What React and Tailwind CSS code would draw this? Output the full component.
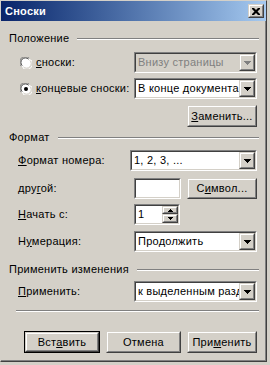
import React from "react"

const face = "bg-[#d4d0c8]"

function Raised({ children, className = "" }) {
  return (
    <div className={`flex border border-t-[#d4d0c8] border-l-[#d4d0c8] border-b-[#404040] border-r-[#404040] ${face} ${className}`}>
      <div className="flex flex-1 items-center justify-center border border-t-white border-l-white border-b-[#808080] border-r-[#808080]">
        {children}
      </div>
    </div>
  )
}

function Sunken({ children, className = "", bg = "bg-white" }) {
  return (
    <div className={`flex min-w-0 border border-t-[#808080] border-l-[#808080] border-b-white border-r-white ${className}`}>
      <div className={`flex flex-1 min-w-0 border border-t-[#404040] border-l-[#404040] border-b-[#d4d0c8] border-r-[#d4d0c8] ${bg}`}>
        {children}
      </div>
    </div>
  )
}

function Tri({ color = "#000", w = 7, h = 4, up = false }) {
  const pts = up ? `0,${h} ${w},${h} ${w / 2},0` : `0,0 ${w},0 ${w / 2},${h}`
  return (
    <svg width={w} height={h} viewBox={`0 0 ${w} ${h}`} className="block">
      <polygon points={pts} fill={color} shapeRendering="crispEdges" />
    </svg>
  )
}

function Combo({ text, disabled, className = "" }) {
  return (
    <Sunken className={`h-[21px] ${className}`} bg={disabled ? "bg-[#d4d0c8]" : "bg-white"}>
      <div className={`flex-1 min-w-0 overflow-hidden whitespace-nowrap pl-[2px] leading-[17px] ${disabled ? "text-[#808080]" : "text-black"}`}>
        {text}
      </div>
      <Raised className="w-[16px] h-[17px] shrink-0">
        <Tri color={disabled ? "#808080" : "#000"} />
      </Raised>
    </Sunken>
  )
}

function Btn({ children, className = "", def }) {
  const b = <Raised className="h-full w-full">{children}</Raised>
  if (def) return <div className={`flex border border-black ${className}`}>{b}</div>
  return <div className={`flex ${className}`}>{b}</div>
}

function Radio({ checked }) {
  return (
    <svg width="12" height="12" viewBox="0 0 12 12" className="block shrink-0">
      <circle cx="6" cy="6" r="5.5" fill="#fff" />
      <path d="M1.2 9.2 A5.5 5.5 0 0 1 9.2 1.2" stroke="#808080" strokeWidth="1" fill="none" />
      <path d="M2.2 8.6 A4.3 4.3 0 0 1 8.6 2.2" stroke="#404040" strokeWidth="1" fill="none" />
      <path d="M10.8 2.8 A5.5 5.5 0 0 1 2.8 10.8" stroke="#fff" strokeWidth="1" fill="none" />
      <path d="M9.8 3.4 A4.3 4.3 0 0 1 3.4 9.8" stroke="#d4d0c8" strokeWidth="1" fill="none" />
      {checked && <circle cx="6" cy="6" r="2" fill="#000" />}
    </svg>
  )
}

function GroupHead({ title, className = "" }) {
  return (
    <div className={`flex items-center h-[13px] pl-[8px] pr-[6px] ${className}`}>
      <span className="leading-[13px] whitespace-nowrap">{title}</span>
      <div className="flex-1 ml-[8px] h-[2px] border-t border-t-[#808080] border-b border-b-white" />
    </div>
  )
}

export default function App() {
  return (
    <div className="w-[270px] h-[365px] bg-[#d4d0c8] overflow-hidden font-['Liberation_Sans',Arial,sans-serif] text-[11px] tracking-[0.25px] text-black">
      <div className="w-[267px] h-[362px] flex flex-col border border-t-[#d4d0c8] border-l-[#d4d0c8] border-b-[#404040] border-r-[#404040]">
        {/* title bar */}
        <div className="h-[20px] flex items-center justify-between pl-[4px] pr-[2px] bg-gradient-to-r from-[#0a246a] to-[#a6caf0]">
          <span className="text-white font-bold text-[11px] leading-none">Сноски</span>
          <Raised className="w-[16px] h-[14px]">
            <svg width="8" height="7" viewBox="0 0 8 7" className="block">
              <path d="M0 0h2l2 2 2-2h2v1L5.5 3.5 8 6v1H6L4 5 2 7H0V6l2.5-2.5L0 1z" fill="#000" />
            </svg>
          </Raised>
        </div>

        <div className="flex-1 flex flex-col border-r border-b border-r-[#808080] border-b-[#808080]">
          {/* Положение */}
          <GroupHead title="Положение" className="mt-[11px]" />
          <div className="flex items-center mt-[7px] pl-[19px] pr-[8px]">
            <div className="flex items-center w-[114px] shrink-0 gap-[4px] whitespace-nowrap">
              <Radio />
              <span><u>с</u>носки:</span>
            </div>
            <Combo text="Внизу страницы" disabled className="flex-1" />
          </div>
          <div className="flex items-center mt-[5px] pl-[19px] pr-[8px]">
            <div className="flex items-center w-[114px] shrink-0 gap-[4px] whitespace-nowrap">
              <Radio checked />
              <span><u>к</u>онцевые сноски:</span>
            </div>
            <Combo text="В конце документа" className="flex-1" />
          </div>
          <div className="flex justify-end mt-[6px] pr-[8px]">
            <Btn className="w-[70px] h-[22px]"><span><u>З</u>аменить...</span></Btn>
          </div>

          {/* Формат */}
          <GroupHead title="Формат" className="mt-[4px]" />
          <div className="flex items-center mt-[6px] pl-[17px] pr-[8px]">
            <div className="w-[112px] shrink-0"><u>Ф</u>ормат номера:</div>
            <Combo text="1, 2, 3, ..." className="flex-1" />
          </div>
          <div className="flex items-center mt-[7px] pl-[17px] pr-[8px]">
            <div className="w-[116px] shrink-0">дру<u>г</u>ой:</div>
            <Sunken className="w-[47px] h-[21px] shrink-0" />
            <Btn className="ml-[6px] flex-1 h-[21px]"><span>С<u>и</u>мвол...</span></Btn>
          </div>
          <div className="flex items-center mt-[5px] pl-[17px] pr-[8px]">
            <div className="w-[116px] shrink-0"><u>Н</u>ачать с:</div>
            <Sunken className="w-[46px] h-[21px] shrink-0">
              <div className="flex-1 pl-[2px] leading-[17px]">1</div>
              <div className="flex flex-col w-[16px]">
                <Raised className="h-[8px]"><Tri w={5} h={3} up /></Raised>
                <Raised className="h-[9px]"><Tri w={5} h={3} /></Raised>
              </div>
            </Sunken>
          </div>
          <div className="flex items-center mt-[6px] pl-[17px] pr-[8px]">
            <div className="w-[116px] shrink-0">Н<u>у</u>мерация:</div>
            <Combo text="Продолжить" className="flex-1" />
          </div>

          {/* Применить изменения */}
          <GroupHead title="Применить изменения" className="mt-[11px]" />
          <div className="flex items-center mt-[5px] pl-[17px] pr-[8px]">
            <div className="w-[116px] shrink-0"><u>П</u>рименить:</div>
            <Combo text="к выделенным разделам" className="flex-1" />
          </div>

          <div className="mt-[8px] ml-[15px] mr-[6px] h-[2px] border-t border-t-[#808080] border-b border-b-white" />

          <div className="flex items-center mt-[19px] pl-[23px] pr-[8px] gap-[6px]">
            <Btn def className="w-[76px] h-[22px]"><span>Вст<u>а</u>вить</span></Btn>
            <Btn className="w-[75px] h-[22px]"><span>Отмена</span></Btn>
            <Btn className="flex-1 h-[22px]"><span>При<u>м</u>енить</span></Btn>
          </div>
        </div>
      </div>
    </div>
  )
}
